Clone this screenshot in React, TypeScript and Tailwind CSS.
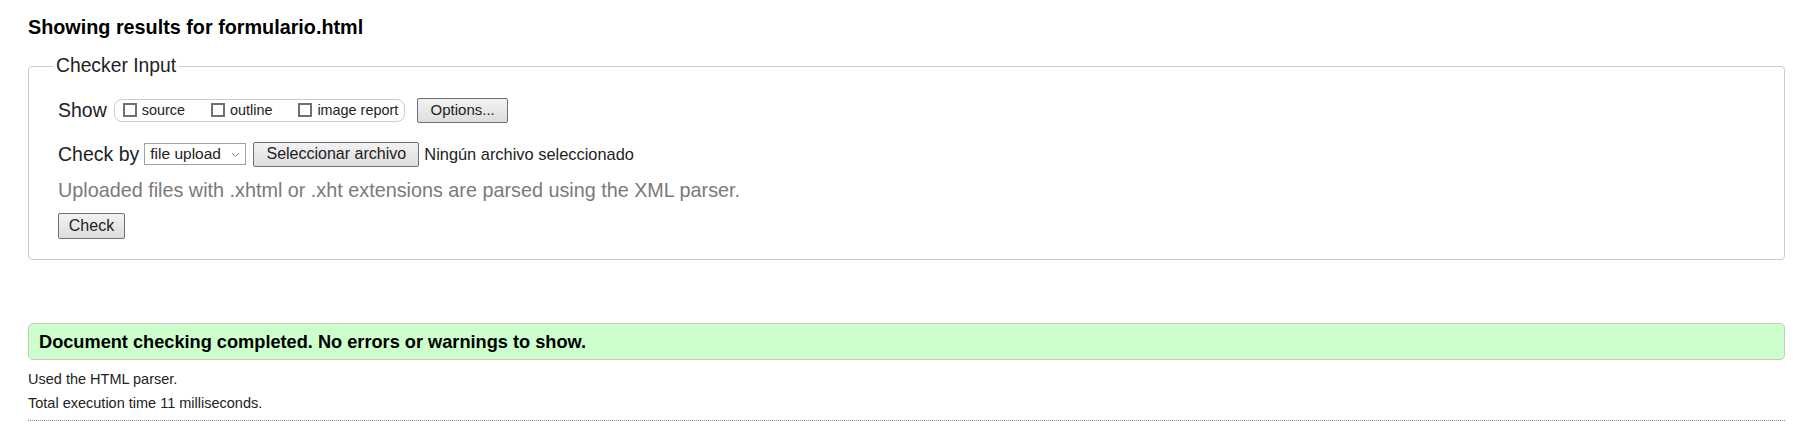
const checkOptions = ["source", "outline", "image report"];

function Box() {
  return <span className="inline-block w-[14px] h-[14px] border-2 border-[#707070] bg-white" />;
}

function App() {
  return (
    <main className="min-h-screen bg-white px-[28px] pt-[15px] text-[#222] font-['Liberation_Sans',Arial,sans-serif]">
      <h2 className="text-[19.8px] leading-[24px] font-bold text-black">Showing results for formulario.html</h2>

      <fieldset className="mt-[16px] border border-[#cccccc] rounded-[4px] pl-[29px] pt-[20px] pb-[20px]">
        <legend className="-ml-[5px] px-[3px] text-[19.3px] leading-[22px] text-[#222]">Checker Input</legend>

        {/* show options */}
        <div className="flex items-center h-[26px]">
          <span className="text-[19.5px] leading-[22px] mr-[7px]">Show</span>
          <div className="flex items-center h-[23px] border border-[#cccccc] rounded-[8px] pl-[8px] pr-[6px]">
            {checkOptions.map((opt, i) => (
              <label key={opt} className={`flex items-center ${i > 0 ? "ml-[26px]" : ""}`}>
                <Box />
                <span className="ml-[5px] text-[14.4px] leading-[16px] text-[#222]">{opt}</span>
              </label>
            ))}
          </div>
          <button className="ml-[12px] w-[91px] h-[25px] border border-[#707070] rounded-[2px] bg-gradient-to-b from-[#f2f2f2] to-[#dddddd] text-[15px] leading-[16px] text-[#222]">
            Options...
          </button>
        </div>

        {/* check by */}
        <div className="flex items-center h-[26px] mt-[18px]">
          <span className="text-[19.5px] leading-[22px] mr-[5px]">Check by</span>
          <div className="flex items-center justify-between w-[102px] h-[22px] border border-[#a0a0a0] bg-white pl-[5px] pr-[5px]">
            <span className="text-[15.5px] leading-[18px] text-[#222]">file upload</span>
            <svg width="9" height="6" viewBox="0 0 9 6" className="mt-[2px]">
              <path d="M1 1l3.5 3.5L8 1" fill="none" stroke="#8a8a8a" strokeWidth="1" />
            </svg>
          </div>
          <button className="ml-[7px] w-[166px] h-[25px] border border-[#707070] rounded-[2px] bg-gradient-to-b from-[#f2f2f2] to-[#dddddd] text-[16px] leading-[18px] text-[#222]">
            Seleccionar archivo
          </button>
          <span className="ml-[5px] text-[16.4px] leading-[18px] text-[#222]">Ningún archivo seleccionado</span>
        </div>

        <p className="mt-[12px] text-[19.8px] leading-[22px] text-[#7a7a7a]">
          Uploaded files with .xhtml or .xht extensions are parsed using the XML parser.
        </p>

        <button className="mt-[12px] block w-[67px] h-[26px] border border-[#707070] rounded-[2px] bg-gradient-to-b from-[#f2f2f2] to-[#dddddd] text-[16px] leading-[18px] text-[#222]">
          Check
        </button>
      </fieldset>

      {/* result */}
      <div className="mt-[63px] h-[37px] flex items-center border border-[#c6c6c6] rounded-[5px] bg-[#ccffcc] pl-[10px]">
        <p className="text-[18.2px] leading-[22px] font-bold text-black">Document checking completed. No errors or warnings to show.</p>
      </div>

      <div className="mt-[7px] text-[14.5px] leading-[24px] text-[#222]">
        <p>Used the HTML parser.</p>
        <p>Total execution time 11 milliseconds.</p>
      </div>
      <hr className="mt-[5px] border-0 border-t border-dotted border-[#888]" />
    </main>
  );
}

export default App;
